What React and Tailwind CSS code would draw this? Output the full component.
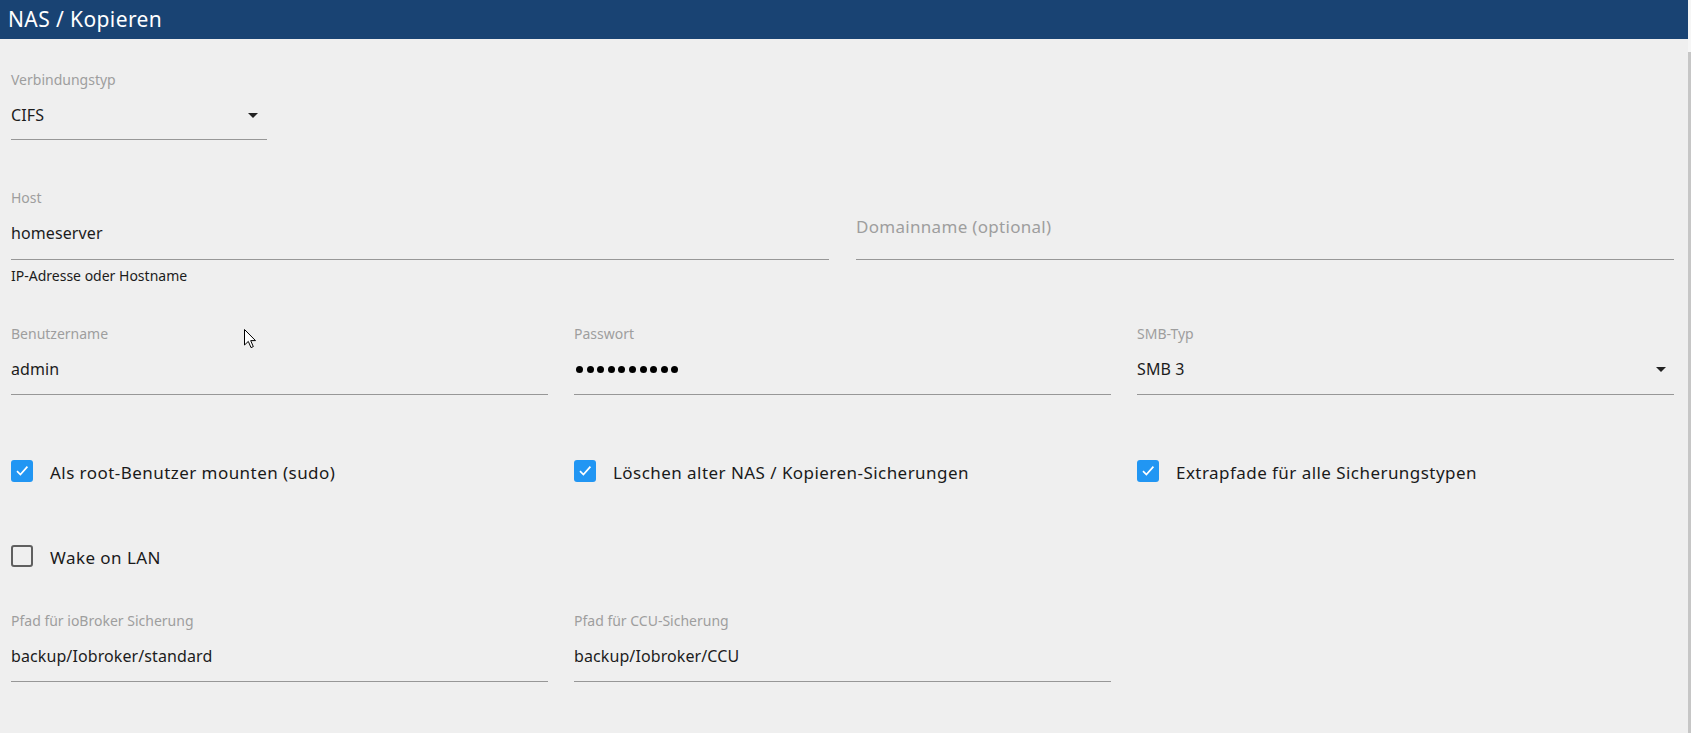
import React from "react";

function Caret({ className = "" }) {
  return (
    <svg width="10" height="5" viewBox="0 0 10 5" className={className}>
      <path d="M0 0 L10 0 L5 5 Z" fill="#222" />
    </svg>
  );
}

function Field({ label, children, select, pb = "pb-[13px]", className = "" }) {
  return (
    <div className={className}>
      <div className="h-5 text-[14px] leading-5 text-[#9e9e9e]">{label}</div>
      <div className={`mt-[13px] ${pb} border-b border-[#979797] flex items-center justify-between`}>
        <div className="h-6 text-[16px] leading-6 text-[#1c1c1c] tracking-[0.1px]">{children}</div>
        {select && <Caret className="mr-[9px]" />}
      </div>
    </div>
  );
}

function Check({ checked, label }) {
  return (
    <div className="flex items-start">
      {checked ? (
        <div className="w-[22px] h-[22px] rounded-[3px] bg-[#2196f3] flex items-center justify-center shrink-0">
          <svg width="22" height="22" viewBox="0 0 22 22">
            <polyline points="6,11.2 9.4,14.6 16.4,6.6" fill="none" stroke="#fff" strokeWidth="1.7" />
          </svg>
        </div>
      ) : (
        <div className="w-[22px] h-[22px] rounded-[3px] border-2 border-[#5f5f5f] shrink-0" />
      )}
      <span className="ml-[17px] mt-[2px] text-[17px] leading-[22px] text-[#1a1a1a] tracking-[0.45px]">{label}</span>
    </div>
  );
}

export default function App() {
  return (
    <div className="relative h-[733px] w-full overflow-hidden bg-[#efefef] flex font-['Noto_Sans','Open_Sans',sans-serif]">
      <div className="flex-1 flex flex-col">
        <div className="h-[39px] bg-[#194373] flex items-center pl-2">
          <span className="text-[21px] text-white tracking-[0.4px]">NAS / Kopieren</span>
        </div>

        <div className="pl-[11px] pr-[14px] pt-[31px]">
          <Field label="Verbindungstyp" select pb="pb-[12px]" className="w-[256px]">
            CIFS
          </Field>

          <div className="mt-[48px] grid grid-cols-2 gap-x-[27px]">
            <div>
              <Field label="Host" pb="pb-[14px]">homeserver</Field>
              <div className="mt-[6px] h-5 text-[14px] leading-5 text-[#1c1c1c]">IP-Adresse oder Hostname</div>
            </div>
            <div>
              <div className="h-5" />
              <div className="mt-[13px] pb-[14px] border-b border-[#979797]">
                <div className="h-6 text-[17px] leading-[12px] text-[#9e9e9e] tracking-[0.3px]">Domainname (optional)</div>
              </div>
            </div>
          </div>

          <div className="mt-[38px] grid grid-cols-3 gap-x-[26px]">
            <Field label="Benutzername">admin</Field>
            <Field label="Passwort">
              <div className="flex items-center h-6 gap-[3.6px] ml-[2px]">
                {Array.from({ length: 10 }).map((_, i) => (
                  <span key={i} className="w-[7px] h-[7px] rounded-full bg-black" />
                ))}
              </div>
            </Field>
            <div>
              <div className="h-5 text-[14px] leading-5 text-[#9e9e9e]">SMB-Typ</div>
              <div className="mt-[13px] pb-[13px] border-b border-[#979797] flex items-center justify-between">
                <div className="h-6 text-[16px] leading-6 text-[#1c1c1c] tracking-[0.1px]">SMB 3</div>
                <Caret className="mr-2" />
              </div>
            </div>
          </div>

          <div className="mt-[65px] grid grid-cols-3 gap-x-[26px]">
            <Check checked label="Als root-Benutzer mounten (sudo)" />
            <Check checked label="Löschen alter NAS / Kopieren-Sicherungen" />
            <Check checked label="Extrapfade für alle Sicherungstypen" />
          </div>

          <div className="mt-[61px]">
            <Check label="Wake on LAN" />
          </div>

          <div className="mt-[42px] grid grid-cols-3 gap-x-[26px]">
            <Field label="Pfad für ioBroker Sicherung">backup/Iobroker/standard</Field>
            <Field label="Pfad für CCU-Sicherung">backup/Iobroker/CCU</Field>
          </div>
        </div>
      </div>

      <div className="w-[3px] flex flex-col">
        <div className="h-[52px] bg-[#f6f6f6]" />
        <div className="flex-1 bg-[#c6c6c6]" />
      </div>

      <svg className="absolute left-[244px] top-[329px]" width="13" height="20" viewBox="0 0 13 20">
        <path d="M0.5 0.5 L0.5 16 L4.3 12.4 L7 18.6 L9.3 17.6 L6.7 11.6 L11.5 11.6 Z" fill="#fff" stroke="#000" strokeWidth="1" />
      </svg>
    </div>
  );
}
